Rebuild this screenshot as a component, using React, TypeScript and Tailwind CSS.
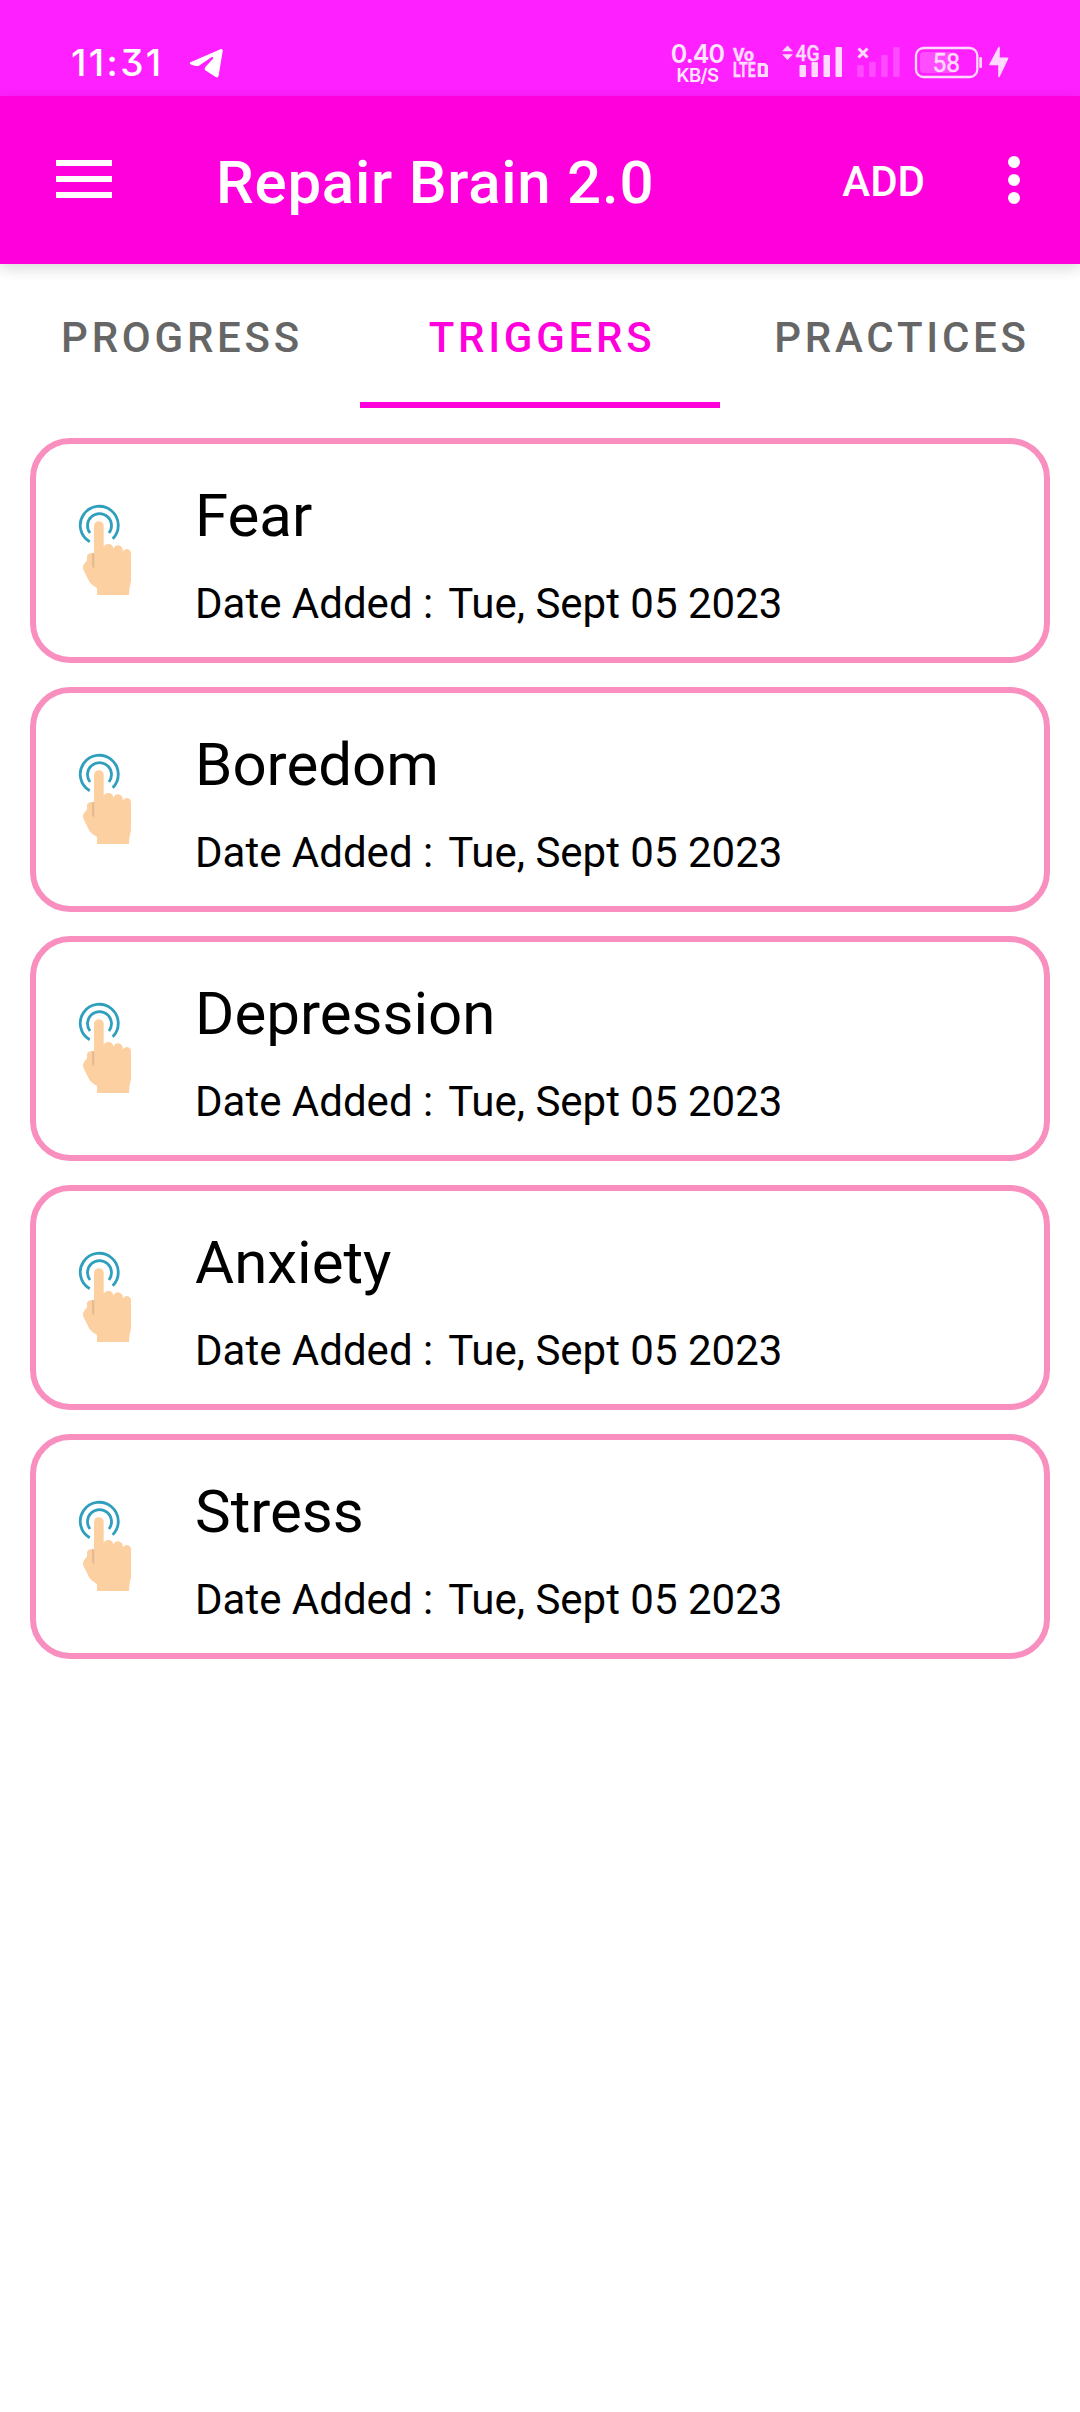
const triggers = ['Fear', 'Boredom', 'Depression', 'Anxiety', 'Stress'];

const tabs = [
  { label: 'PROGRESS', active: false },
  { label: 'TRIGGERS', active: true },
  { label: 'PRACTICES', active: false },
];

function TelegramIcon() {
  return (
    <svg className="ml-[27px] mt-[47px]" width="36" height="32" viewBox="187 47 36 32" fill="#fff">
      <path d="M219.5 49.2Q222 48.4 221.7 51L217.6 75.8Q217 78.2 214.7 77L205 70.8Q202.6 69 204.4 67L212.2 58.4Q212.6 56.4 210.4 57.2L198.600 65.200Q196.500 66.500 194.400 65.900L189.800 64.400Q187.600 63.200 190 62Z" />
    </svg>
  );
}

function VolteIcon() {
  return (
    <svg className="ml-[9px] mt-[45px] overflow-visible font-['Roboto'] font-bold" width="38" height="34" viewBox="732 45 38 34" fill="#ffd9ff">
      <text x="733" y="60.500" fontSize="17.500" stroke="#ffd9ff" strokeWidth="0.500" textLength="21" lengthAdjust="spacingAndGlyphs">Vo</text>
      <text x="733" y="76.500" fontSize="19.500" stroke="#ffd9ff" strokeWidth="0.500" textLength="22.500" lengthAdjust="spacingAndGlyphs">LTE</text>
      <path fillRule="evenodd" d="M757.700 63H765L768 65.500V77H757.700ZM761 66V74H764.500V66Z" />
    </svg>
  );
}

function SignalIcon() {
  return (
    <svg className="ml-[10px] mt-[43px] overflow-visible font-['Roboto'] font-medium" width="64" height="36" viewBox="780 43 64 36" fill="#ffd9ff">
      <path d="M782 51.300L787.500 45.500L793 51.300ZM782 54.300L787.500 60L793 54.300Z" />
      <text x="795.500" y="60.500" fontSize="22" stroke="#ffd9ff" strokeWidth="0.400" textLength="24" lengthAdjust="spacingAndGlyphs">4G</text>
      <rect x="799.500" y="65" width="6.500" height="12" rx="1" />
      <rect x="811.500" y="62" width="6.500" height="15" rx="1" />
      <rect x="823.500" y="55" width="6.500" height="22" rx="1" />
      <rect x="835.500" y="47" width="6.500" height="30" rx="1" />
    </svg>
  );
}

function NoSignalIcon() {
  return (
    <svg className="ml-[12px] mt-[45px]" width="46" height="34" viewBox="856 45 46 34" fill="#ff4aff">
      <path d="M858.500 48.500L867.500 57.500M867.500 48.500L858.500 57.500" stroke="#ffd9ff" strokeWidth="3" />
      <rect x="857.200" y="65" width="6.500" height="12" rx="1" />
      <rect x="869.200" y="62" width="6.500" height="15" rx="1" />
      <rect x="881.200" y="55" width="6.500" height="22" rx="1" />
      <rect x="893.200" y="47" width="6.500" height="30" rx="1" />
    </svg>
  );
}

function BatteryIcon() {
  return (
    <svg className="ml-[12px] mt-[45px] overflow-visible font-['Roboto']" width="98" height="35" viewBox="914 45 98 35" fill="#ffd9ff">
      <rect x="916" y="48" width="61.300" height="29" rx="7.500" fill="none" stroke="#ffd9ff" strokeWidth="2.300" />
      <path d="M924 52H951V73H924Q920 73 920 69V56Q920 52 924 52Z" fill="#ff4dff" />
      <rect x="979.300" y="57" width="2.700" height="11" rx="1" />
      <text x="932.500" y="71.500" fontSize="25" stroke="#ffd9ff" strokeWidth="0.500" textLength="27.500" lengthAdjust="spacingAndGlyphs">58</text>
      <path d="M998.500 46.800L989.300 64.200Q989 65.300 990 65.300H998.200V76.500Q998.800 77.800 999.800 76.500L1008.300 58.800Q1008.600 57.600 1007.500 57.600H999.800V47.200Q999.200 46 998.500 46.800Z" />
    </svg>
  );
}

function StatusBar() {
  return (
    <div className="flex h-24 items-start bg-[#ff20ff] pl-[71px] text-white">
      <span className="mt-10 w-[90px] whitespace-nowrap font-['Inter'] text-[37px] font-medium leading-[45px] tracking-[2.4px] [font-feature-settings:'cv09']">
        11:31
      </span>
      <TelegramIcon />
      <div className="ml-auto mt-[43px] flex w-[51px] flex-col items-center whitespace-nowrap font-['Inter'] font-semibold text-[#ffe6ff]">
        <span className="text-[25px] leading-[22px] tracking-[-0.9px]">0.40</span>
        <span className="mt-px text-[18.500px] leading-[18px] tracking-[-0.5px]">KB/S</span>
      </div>
      <VolteIcon />
      <SignalIcon />
      <NoSignalIcon />
      <BatteryIcon />
      <div className="w-[68px]" />
    </div>
  );
}

function Toolbar() {
  return (
    <header className="flex h-[168px] items-center bg-[#ff00dd] pl-14 pr-[60px] text-white shadow-[0_4px_14px_rgba(0,0,0,0.16)]">
      <div className="-mt-0.5 flex h-[38px] w-14 flex-col justify-between">
        <div className="h-1.5 bg-white" />
        <div className="h-1.5 bg-white" />
        <div className="h-1.5 bg-white" />
      </div>
      <h1 className="ml-[104px] mt-[5px] whitespace-nowrap text-[60px] font-medium leading-[70px] tracking-[0.75px]">Repair Brain 2.0</h1>
      <span className="ml-auto mt-1 text-[42px] font-medium leading-[50px]">ADD</span>
      <div className="ml-[83px] flex flex-col gap-1.5">
        <div className="size-3 rounded-full bg-white" />
        <div className="size-3 rounded-full bg-white" />
        <div className="size-3 rounded-full bg-white" />
      </div>
    </header>
  );
}

function TabBar() {
  return (
    <nav className="grid h-36 grid-cols-3">
      {tabs.map((tab) => (
        <div
          key={tab.label}
          className={
            tab.active
              ? 'border-b-[6px] border-[#ff00dd] pl-1 pt-[49px] text-center text-[#ff00dd]'
              : 'pl-1 pt-[49px] text-center text-[#666666]'
          }
        >
          <span className="block text-[42px] font-medium leading-[50px] tracking-[3.75px]">{tab.label}</span>
        </div>
      ))}
    </nav>
  );
}

function TouchIcon() {
  return (
    <svg className="ml-[39px] mt-[58px] shrink-0" width="60" height="96" viewBox="75 502 60 96">
      <g fill="none" stroke="#2f9fbd" strokeWidth="2.800">
        <path d="M89.700 541.700A19 19 0 1 1 112.700 538.700" />
        <path d="M90 533A12 12 0 1 1 109 533" />
      </g>
      <path
        fill="#fcd0a1"
        d="M94 526A4.850 4.850 0 0 1 103.700 526V547A5 5 0 0 1 113.300 548.500A4.800 4.800 0 0 1 122.500 551.500Q124 549 127 549Q131 549.500 131 553.500V581Q129 588 129 595H97V588Q92 585.500 89.500 582L83.500 570Q82 566.500 84.500 563.500L87 560.500V556Q88 552.500 94 553Z"
      />
      <path fill="#e5bb95" d="M92 553.200H94.300V568H93.500Q92 567 92 565Z" />
    </svg>
  );
}

function TriggerCard({ name }: { name: string }) {
  return (
    <li className="flex h-[225px] rounded-[40px] border-[6px] border-[#f88fbf] bg-white">
      <TouchIcon />
      <div className="ml-[60px] pt-[37px] text-black">
        <h2 className="text-[60px] font-normal leading-[70px]">{name}</h2>
        <div className="mt-7 flex gap-[15px] text-[42px] leading-[50px]">
          <span>Date Added :</span>
          <span>Tue, Sept 05 2023</span>
        </div>
      </div>
    </li>
  );
}

export default function App() {
  return (
    <div className="min-h-[2412px] w-[1080px] bg-white font-['Roboto',sans-serif]">
      <StatusBar />
      <Toolbar />
      <TabBar />
      <ul className="flex flex-col gap-6 px-[30px] pt-[30px]">
        {triggers.map((name) => (
          <TriggerCard key={name} name={name} />
        ))}
      </ul>
    </div>
  );
}
